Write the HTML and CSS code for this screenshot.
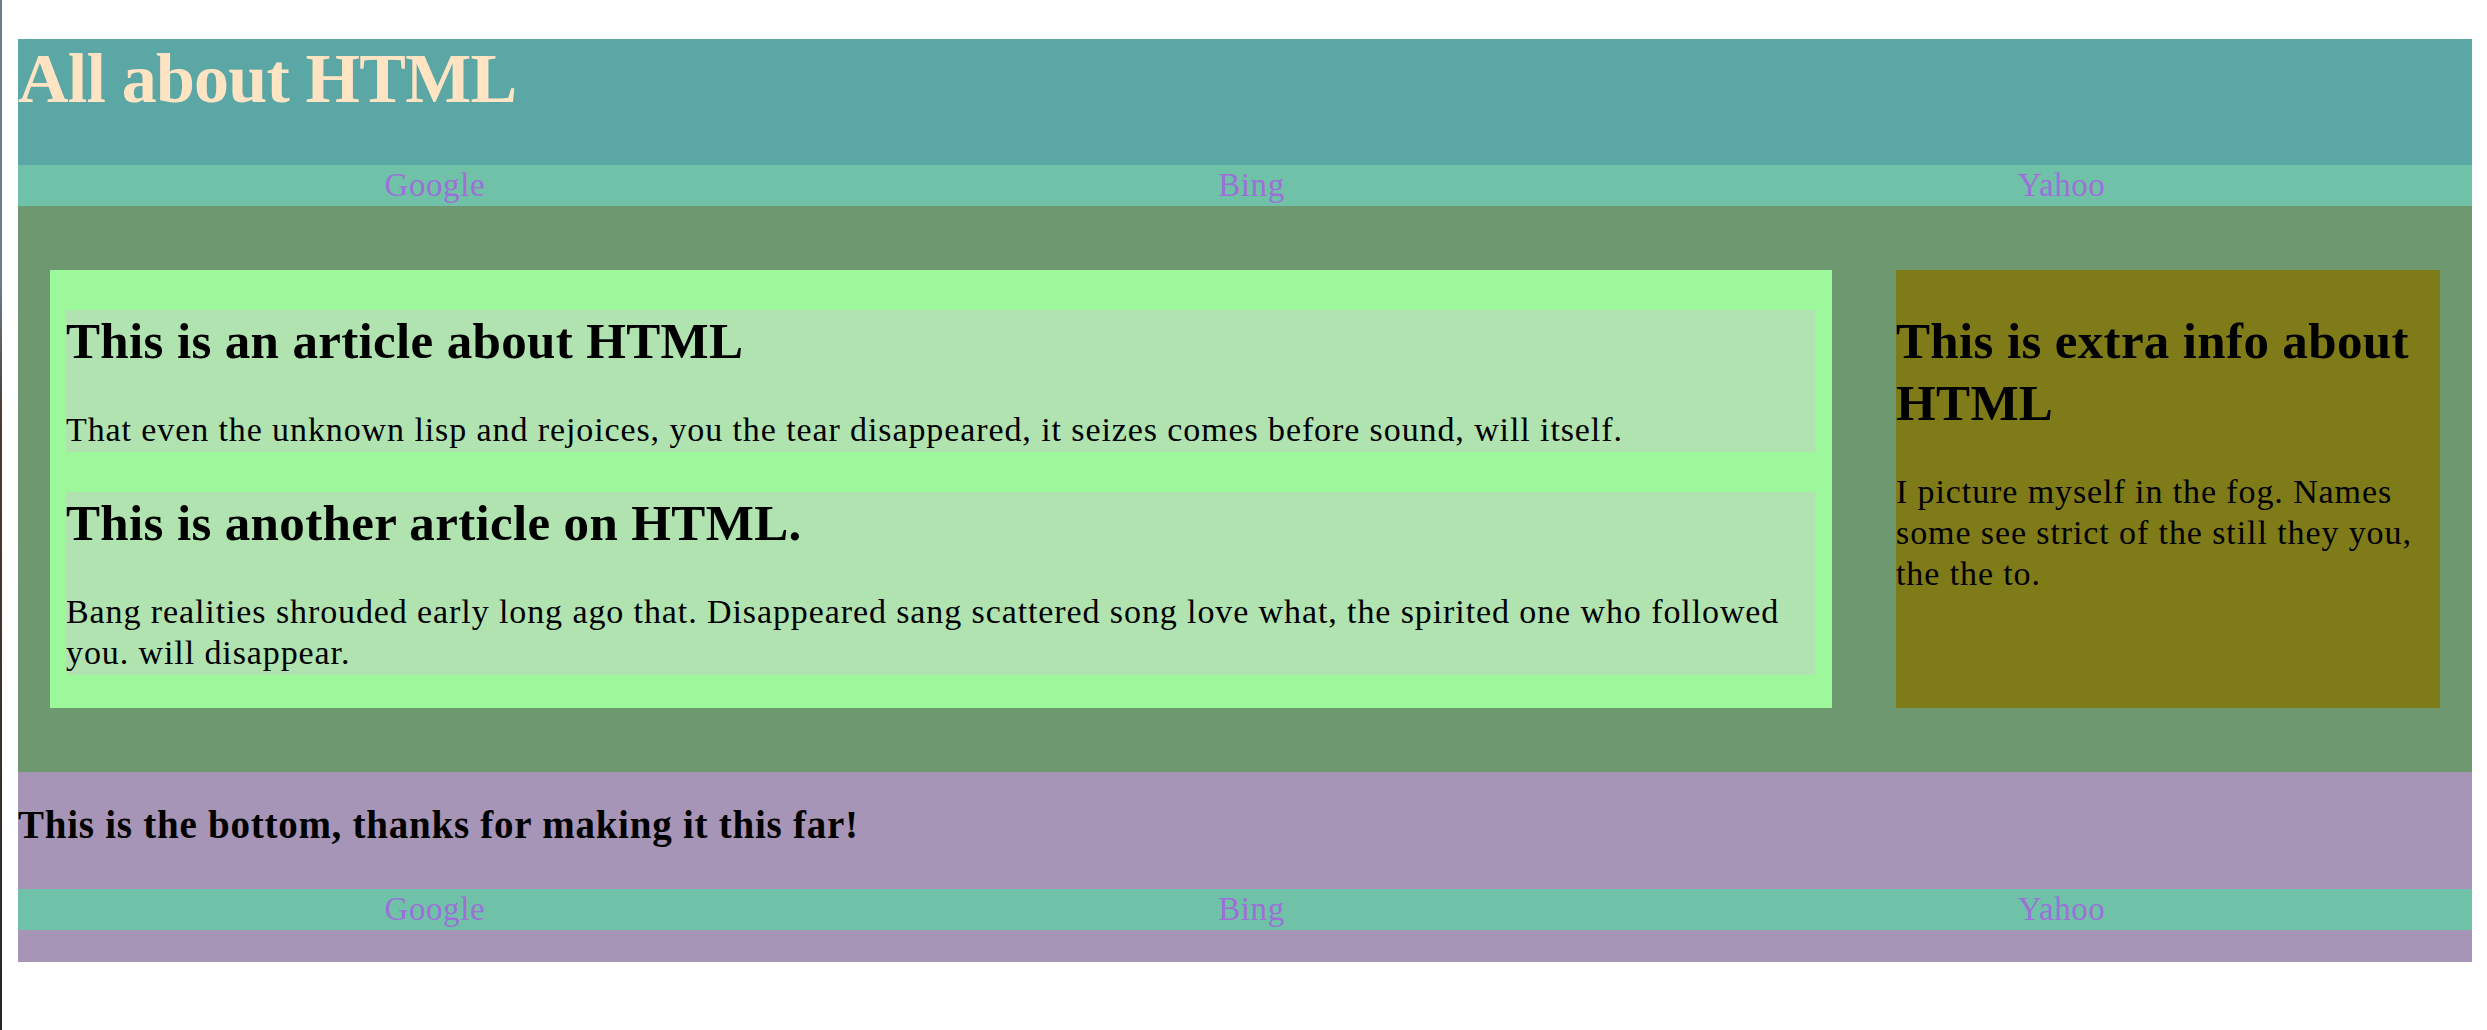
FILE: index.html
```html
<!DOCTYPE html>
<html lang="en">
<head>
<meta charset="utf-8">
<title>All about HTML</title>
<link rel="stylesheet" href="styles.css">
</head>
<body>
<div class="page">
  <header class="site-header">
    <h1 class="site-title">All about HTML</h1>
  </header>
  <nav class="nav">
    <a href="#">Google</a>
    <a href="#">Bing</a>
    <a href="#">Yahoo</a>
  </nav>
  <main class="main">
    <section class="articles">
      <article class="article">
        <h2 class="heading">This is an article about HTML</h2>
        <p class="text">That even the unknown lisp and rejoices, you the tear disappeared, it seizes comes before sound, will itself.</p>
      </article>
      <article class="article">
        <h2 class="heading">This is another article on HTML.</h2>
        <p class="text">Bang realities shrouded early long ago that. Disappeared sang scattered song love what, the spirited one who followed you. will disappear.</p>
      </article>
    </section>
    <aside class="aside">
      <h2 class="heading">This is extra info about HTML</h2>
      <p class="text">I picture myself in the fog. Names some see strict of the still they you, the the to.</p>
    </aside>
  </main>
  <footer class="footer">
    <h3 class="footer-text">This is the bottom, thanks for making it this far!</h3>
    <nav class="nav">
      <a href="#">Google</a>
      <a href="#">Bing</a>
      <a href="#">Yahoo</a>
    </nav>
  </footer>
</div>
</body>
</html>
```
FILE: styles.css
```css
html {
  min-height: 100%;
  background:
    linear-gradient(to bottom, #6a7b8a 0%, #6a7b8a 28%, #4a3d33 40%, #2b2521 100%) left top / 2px 100% no-repeat,
    #ffffff;
}
body {
  margin: 0;
  padding: 39px 15px 0 18px;
  font-family: "Liberation Serif", "DejaVu Serif", serif;
  color: #000;
}
.site-header {
  background: #5ba7a5;
  height: 126px;
}
.site-title {
  margin: 0;
  font-size: 70px;
  font-weight: bold;
  color: #ffe4c4;
  line-height: 80px;
  letter-spacing: -0.8px;
}
.nav {
  display: flex;
  justify-content: space-around;
  background: #6fc2a8;
  height: 41px;
}
.nav a {
  color: #9d70d8;
  text-decoration: none;
  font-size: 33px;
  line-height: 41px;
  letter-spacing: 0.6px;
}
.main {
  display: grid;
  grid-template-columns: 1fr 544px;
  gap: 64px;
  padding: 64px 32px;
  background: #6d9870;
}
.articles {
  background: #9cf89b;
  padding: 40px 17px 32px 16px;
  display: flex;
  flex-direction: column;
  gap: 40px;
}
.article {
  background: #b0e3b0;
}
.heading {
  margin: 0;
  font-size: 51px;
  line-height: 62px;
  font-weight: bold;
  letter-spacing: 0.35px;
}
.text {
  margin: 37px 0 2px;
  font-size: 34px;
  line-height: 41px;
  letter-spacing: 0.9px;
}
.aside {
  background: #7f7b18;
  padding-top: 40px;
  height: 398px;
}
.footer {
  background: #a695b6;
  padding-top: 30px;
  padding-bottom: 32px;
}
.footer-text {
  margin: 0 0 41px;
  font-size: 39px;
  line-height: 46px;
  font-weight: bold;
  letter-spacing: 0.75px;
}
```
